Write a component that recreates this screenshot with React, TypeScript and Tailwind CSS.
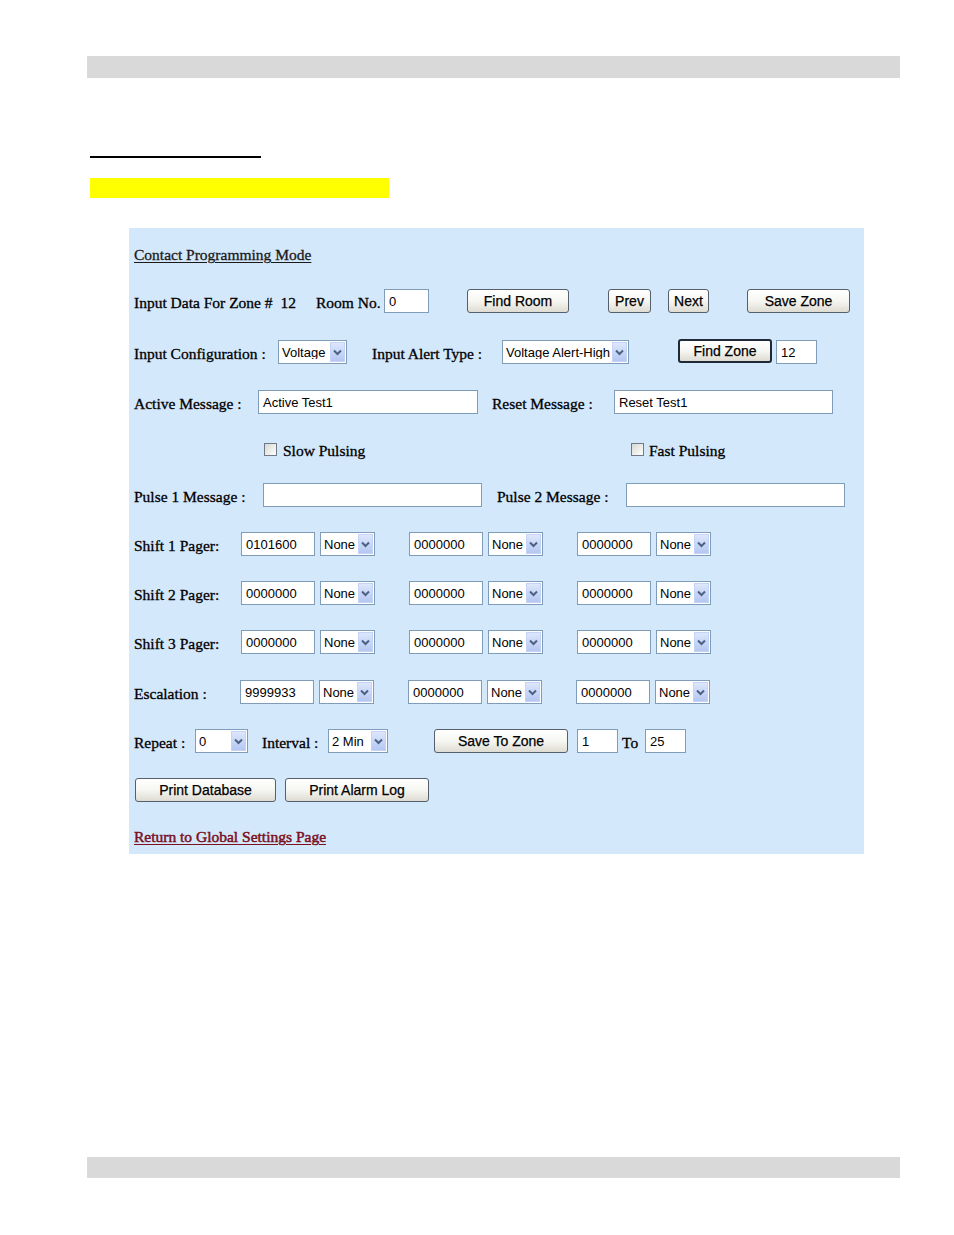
import React from "react";

const serif = "font-['Liberation_Serif','Times_New_Roman',serif] text-[15.5px] text-black [-webkit-text-stroke:0.3px_#000] whitespace-nowrap pt-[4px]";
const sans = "font-['Liberation_Sans',Arial,sans-serif]";

function Field({ w, value = "", h = "h-[24px]" }: { w: string; value?: string; h?: string }) {
  return (
    <div className={`${w} ${h} shrink-0 border border-[#7f9db9] bg-white ${sans} text-[13px] text-black flex items-center pl-[4px] overflow-hidden whitespace-nowrap leading-none`}>
      {value}
    </div>
  );
}

function Select({ w, value }: { w: string; value: string }) {
  return (
    <div className={`${w} h-[24px] shrink-0 border border-[#7f9db9] bg-white ${sans} text-[13px] text-black flex items-center pl-[3px] pr-[1px] whitespace-nowrap leading-none`}>
      <span className="flex-1 overflow-hidden">{value}</span>
      <span className="w-[15px] h-[20px] shrink-0 bg-gradient-to-b from-[#dde7fc] to-[#b5c7f2] border border-[#c5d4f6] flex items-center justify-center">
        <svg width="9" height="7" viewBox="0 0 9 7">
          <path d="M1 1.5 L4.5 5 L8 1.5" stroke="#4d6185" strokeWidth="2" fill="none" />
        </svg>
      </span>
    </div>
  );
}

function Btn({ w, label, strong = false }: { w: string; label: string; strong?: boolean }) {
  return (
    <div
      className={`${w} h-[24px] shrink-0 rounded-[3px] ${strong ? "border-2 border-[#1f2a38]" : "border border-[#55606c]"} bg-gradient-to-b from-[#ffffff] via-[#f6f6f2] to-[#dedcd2] ${sans} text-[14px] text-black [-webkit-text-stroke:0.25px_#000] flex items-center justify-center whitespace-nowrap leading-none`}
    >
      {label}
    </div>
  );
}

function CheckBox() {
  return <span className="w-[13px] h-[13px] shrink-0 border border-[#6f7a86] bg-gradient-to-br from-[#d8d8d2] to-[#ffffff]" />;
}

function PagerRow({ label, lw, vals }: { label: string; lw: string; vals: string[] }) {
  return (
    <div className="flex items-center h-[24px]">
      <span className={`${serif} ${lw} shrink-0`}>{label}</span>
      <Field w="w-[74px]" value={vals[0]} />
      <div className="ml-[5px]"><Select w="w-[55px]" value="None" /></div>
      <div className="ml-[34px]"><Field w="w-[74px]" value={vals[1]} /></div>
      <div className="ml-[5px]"><Select w="w-[55px]" value="None" /></div>
      <div className="ml-[34px]"><Field w="w-[74px]" value={vals[2]} /></div>
      <div className="ml-[5px]"><Select w="w-[55px]" value="None" /></div>
    </div>
  );
}

export default function App() {
  return (
    <div className="w-[954px] h-[1235px] bg-white flex flex-col pt-[56px] overflow-hidden">
      <div className="ml-[87px] w-[813px] h-[22px] bg-[#d9d9d9] shrink-0" />
      <div className="mt-[78px] ml-[90px] w-[171px] h-[2px] bg-black shrink-0" />
      <div className="mt-[20px] ml-[90px] w-[299px] h-[20px] bg-[#ffff00] shrink-0" />

      <div className="mt-[30px] ml-[129px] w-[735px] h-[626px] bg-[#d4e8fc] shrink-0 flex flex-col pl-[5px] pt-[15px]">
        {/* Title */}
        <div className="h-[24px] flex items-center">
          <span className="font-['Liberation_Serif','Times_New_Roman',serif] text-[15.5px] text-[#1a1a1a] [-webkit-text-stroke:0.3px_#1a1a1a] whitespace-nowrap underline underline-offset-2">Contact Programming Mode</span>
        </div>

        {/* Input data row */}
        <div className="mt-[22px] h-[24px] flex items-center">
          <span className={`${serif} w-[182px] shrink-0`}>
            Input Data For Zone #<span className="ml-[8px]">12</span>
          </span>
          <span className={`${serif} w-[68px] shrink-0`}>Room No.</span>
          <Field w="w-[45px]" value="0" />
          <div className="ml-[38px]"><Btn w="w-[102px]" label="Find Room" /></div>
          <div className="ml-[39px]"><Btn w="w-[43px]" label="Prev" /></div>
          <div className="ml-[17px]"><Btn w="w-[41px]" label="Next" /></div>
          <div className="ml-[38px]"><Btn w="w-[103px]" label="Save Zone" /></div>
        </div>

        {/* Input configuration row */}
        <div className="mt-[27px] h-[24px] flex items-center">
          <span className={`${serif} w-[144px] shrink-0`}>Input Configuration :</span>
          <Select w="w-[69px]" value="Voltage" />
          <span className={`${serif} ml-[25px] w-[130px] shrink-0`}>Input Alert Type :</span>
          <Select w="w-[127px]" value="Voltage Alert-High" />
          <div className="ml-[49px] -mt-[3px]"><Btn w="w-[94px]" label="Find Zone" strong /></div>
          <div className="ml-[4px]"><Field w="w-[41px]" value="12" /></div>
        </div>

        {/* Messages row */}
        <div className="mt-[26px] h-[24px] flex items-center">
          <span className={`${serif} w-[124px] shrink-0`}>Active Message :</span>
          <Field w="w-[220px]" value="Active Test1" />
          <span className={`${serif} ml-[14px] w-[122px] shrink-0`}>Reset Message :</span>
          <Field w="w-[219px]" value="Reset Test1" />
        </div>

        {/* Pulsing row */}
        <div className="mt-[23px] h-[24px] flex items-center">
          <div className="ml-[130px] w-[367px] shrink-0 flex items-center">
            <CheckBox />
            <span className={`${serif} ml-[6px] pt-[2px]`}>Slow Pulsing</span>
          </div>
          <CheckBox />
          <span className={`${serif} ml-[5px] pt-[2px]`}>Fast Pulsing</span>
        </div>

        {/* Pulse messages */}
        <div className="mt-[22px] h-[24px] flex items-center">
          <span className={`${serif} w-[129px] shrink-0`}>Pulse 1 Message :</span>
          <Field w="w-[219px]" />
          <span className={`${serif} ml-[15px] w-[129px] shrink-0`}>Pulse 2 Message :</span>
          <Field w="w-[219px]" />
        </div>

        <div className="mt-[25px]">
          <PagerRow label="Shift 1 Pager:" lw="w-[107px]" vals={["0101600", "0000000", "0000000"]} />
        </div>
        <div className="mt-[25px]">
          <PagerRow label="Shift 2 Pager:" lw="w-[107px]" vals={["0000000", "0000000", "0000000"]} />
        </div>
        <div className="mt-[25px]">
          <PagerRow label="Shift 3 Pager:" lw="w-[107px]" vals={["0000000", "0000000", "0000000"]} />
        </div>
        <div className="mt-[26px]">
          <PagerRow label="Escalation :" lw="w-[106px]" vals={["9999933", "0000000", "0000000"]} />
        </div>

        {/* Repeat row */}
        <div className="mt-[25px] h-[24px] flex items-center">
          <span className={`${serif} w-[61px] shrink-0`}>Repeat :</span>
          <Select w="w-[53px]" value="0" />
          <span className={`${serif} ml-[14px] w-[66px] shrink-0`}>Interval :</span>
          <Select w="w-[60px]" value="2 Min" />
          <div className="ml-[46px] -mt-[1px]"><Btn w="w-[134px]" label="Save To Zone" /></div>
          <div className="ml-[9px]"><Field w="w-[41px]" value="1" /></div>
          <span className={`${serif} ml-[4px] w-[23px] shrink-0`}>To</span>
          <Field w="w-[41px]" value="25" />
        </div>

        {/* Print row */}
        <div className="mt-[25px] h-[24px] flex items-center">
          <div className="ml-[1px]"><Btn w="w-[141px]" label="Print Database" /></div>
          <div className="ml-[9px]"><Btn w="w-[144px]" label="Print Alarm Log" /></div>
        </div>

        {/* Link */}
        <div className="mt-[23px] h-[24px] flex items-center">
          <span className="font-['Liberation_Serif','Times_New_Roman',serif] text-[15.5px] text-[#7b1020] [-webkit-text-stroke:0.5px_#7b1020] underline underline-offset-2 whitespace-nowrap">
            Return to Global Settings Page
          </span>
        </div>
      </div>

      <div className="mt-[303px] ml-[87px] w-[813px] h-[21px] bg-[#d9d9d9] shrink-0" />
    </div>
  );
}
